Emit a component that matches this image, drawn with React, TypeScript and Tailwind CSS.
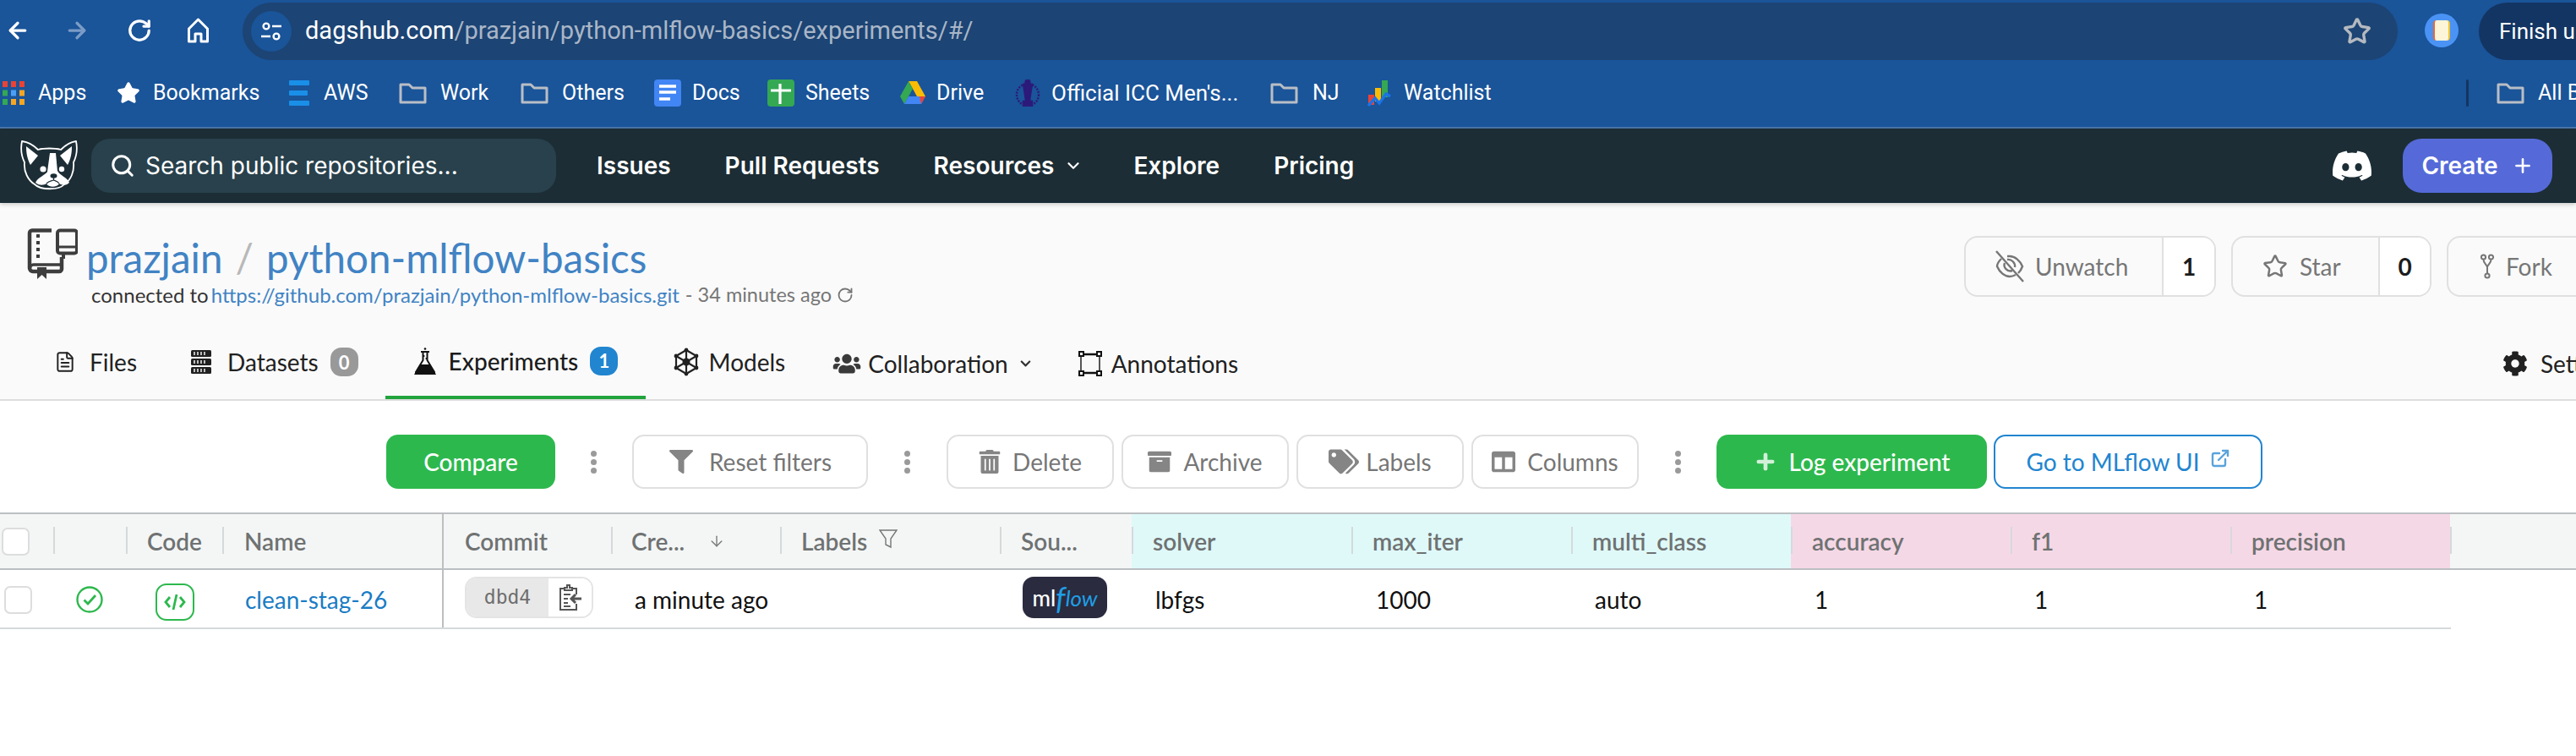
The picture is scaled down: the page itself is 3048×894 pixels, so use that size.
import React from "react";
import { ArrowLeft, ArrowRight, RotateCw, Star, Search, ChevronDown, Plus, ExternalLink, ArrowDown, FileText } from "lucide-react";
import { FaDiscord, FaUsers, FaCog, FaTrashAlt, FaArchive, FaTags, FaColumns, FaFilter, FaChevronDown } from "react-icons/fa";

const FolderIcon = () => (
  <svg viewBox="0 0 33 25" className="w-[33px] h-[25px] shrink-0" fill="none" stroke="#b9bec5" strokeWidth="3" strokeLinejoin="round">
    <path d="M2 2h10l4 4h15v17H2z" />
  </svg>
);

const Bookmark = ({ cls, labelCls, icon, label }: { cls: string; labelCls: string; icon: React.ReactNode; label: string }) => (
  <div className={cls}>
    {icon}
    <span className={labelCls}>{label}</span>
  </div>
);

const AppsIcon = () => (
  <svg viewBox="0 0 26 28" className="w-[26px] h-[28px] shrink-0">
    {["#ea4335", "#ea4335", "#ea4335", "#34a853", "#4a9ff5", "#f5a623", "#34a853", "#f5a623", "#f5a623"].map((c, i) => (
      <rect key={i} x={(i % 3) * 10} y={Math.floor(i / 3) * 10.5} width="6" height="7" fill={c} />
    ))}
  </svg>
);

const Dots = ({ cls }: { cls: string }) => (
  <div className={cls}>
    <span className="w-[7px] h-[7px] rounded-full bg-[#9a9a9a]" />
    <span className="w-[7px] h-[7px] rounded-full bg-[#9a9a9a]" />
    <span className="w-[7px] h-[7px] rounded-full bg-[#9a9a9a]" />
  </div>
);

const ToolButton = ({ icon, label }: { icon: React.ReactNode; label: string }) => (
  <button className="w-[198px] h-[64px] rounded-[14px] border-2 border-[#e0e0e0] bg-white flex items-center justify-center gap-[14px] text-[28px] text-[#767676]">
    {icon}
    <span>{label}</span>
  </button>
);

const Logo = () => (
  <svg viewBox="0 0 68 62" className="w-[68px] h-[62px] shrink-0">
    <path d="M2 2C10 3 17 8 21 12C28 10 41 10 48 12C52 8 59 3 66 2C68 12 66 21 63 27C64 38 60 48 52 53C46 60 24 60 17 53C9 48 4 38 5 27C2 21 0 12 2 2Z" fill="none" stroke="#fff" strokeWidth="1.800" strokeLinejoin="round" />
    <path d="M7 8L21 19L12 30C8 23 7 15 7 8Z" fill="#fff" />
    <path d="M61 8L47 19L56 30C60 23 61 15 61 8Z" fill="#fff" />
    <path d="M35 16H42L44 38H32Z" fill="#fff" />
    <circle cx="27" cy="35" r="3.600" fill="#fff" />
    <circle cx="49" cy="35" r="3.200" fill="#fff" />
    <path d="M33 37C30 42 20 45 18 51C23 55 28 54 31 52C33 57 44 57 46 52C49 54 54 55 58 51C56 45 46 42 44 37Z" fill="#fff" />
    <ellipse cx="39.500" cy="43" rx="4" ry="2.800" fill="#1c2d35" />
    <path d="M39.500 45V48M31 52C34 49 37 49 39.500 48C42 49 44 49 46 52" stroke="#1c2d35" strokeWidth="1.300" fill="none" />
  </svg>
);

const Th = ({ cls, children }: { cls: string; children?: React.ReactNode }) => (
  <div className={cls}>{children}</div>
);

const divider = "relative flex items-center before:content-[''] before:absolute before:left-0 before:top-[15px] before:h-[32px] before:w-[1.5px] before:bg-[#d6d9da]";
const bm = "text-[25px] leading-[30px] text-white whitespace-nowrap";

export default function App() {
  return (
    <div className="w-[3048px] h-[894px] overflow-hidden bg-white flex flex-col font-['Lato',sans-serif]">
      {/* Browser toolbar */}
      <div className="h-[72px] bg-[#1a5499] flex items-center shrink-0 font-['Roboto',sans-serif]">
        <ArrowLeft className="ml-[6px] w-[30px] h-[30px] shrink-0 text-white" strokeWidth={2.6} />
        <ArrowRight className="ml-[40px] w-[30px] h-[30px] shrink-0 text-[#7b9cc6]" strokeWidth={2.6} />
        <RotateCw className="ml-[44px] w-[30px] h-[30px] shrink-0 text-white" strokeWidth={2.6} />
        <svg viewBox="0 0 26 30" className="ml-[41px] w-[27px] h-[30px] shrink-0" fill="none" stroke="#fff" strokeWidth="3" strokeLinejoin="round">
          <path d="M2 13L13 2l11 11v15h-7.500v-9h-7v9H2z" />
        </svg>
        <div className="ml-[39px] w-[2550px] shrink-0 h-[68px] mt-[2px] rounded-[34px] bg-[#1c4474] flex items-center pl-[10px]">
          <div className="w-[48px] h-[48px] rounded-full bg-[#1a5499] flex items-center justify-center">
            <svg viewBox="0 0 26 26" className="w-[26px] h-[26px]" fill="none" stroke="#fff" strokeWidth="2.400">
              <circle cx="7" cy="7" r="3.400" />
              <path d="M14 7h11M1 19h11" />
              <circle cx="19" cy="19" r="3.400" />
            </svg>
          </div>
          <div className="ml-[16px] pb-[2px] text-[29px] leading-[36px] whitespace-nowrap">
            <span className="text-white">dagshub.com</span>
            <span className="text-[#a9b6c7]">/prazjain/python-mlflow-basics/experiments/#/</span>
          </div>
          <Star className="ml-auto mr-[31px] w-[34px] h-[34px] text-[#b4b9c0]" strokeWidth={2.4} />
        </div>
        <div className="ml-[32px] w-[40px] h-[40px] shrink-0 rounded-full bg-[#4a93f5] flex items-center justify-center">
          <div className="w-[20px] h-[24px] rounded-[4px] bg-[#fdf5d8] border-r-2 border-l-2 border-r-[#f2c230] border-l-[#e8683a]" />
        </div>
        <div className="ml-[24px] h-[68px] mt-[2px] flex-1 rounded-l-[34px] bg-[#133563] pl-[24px] flex items-center text-[26px] text-white whitespace-nowrap">Finish u</div>
      </div>
      {/* Bookmarks */}
      <div className="h-[80px] pb-[2px] bg-[#1a5499] border-b-2 border-b-[#4a76ab] flex items-center shrink-0 font-['Roboto',sans-serif]">
        <Bookmark cls="ml-[3px] flex items-center gap-[16px]" labelCls={`${bm} w-[56px]`} icon={<AppsIcon />} label="Apps" />
        <Bookmark cls="ml-[37px] flex items-center gap-[15px]" labelCls={`${bm} w-[124px]`} icon={<Star className="w-[28px] h-[28px] text-white fill-white" />} label="Bookmarks" />
        <Bookmark cls="ml-[37px] flex items-center gap-[17px]" labelCls={`${bm} w-[52px]`} icon={
          <svg viewBox="0 0 24 30" className="w-[24px] h-[30px] shrink-0"><rect width="24" height="6" rx="1" fill="#1a8fe8" /><rect y="12" width="22" height="6" rx="1" fill="#1a8fe8" /><rect y="24" width="24" height="6" rx="1" fill="#1a8fe8" /></svg>
        } label="AWS" />
        <Bookmark cls="ml-[37px] flex items-center gap-[16px]" labelCls={`${bm} w-[57px]`} icon={<FolderIcon />} label="Work" />
        <Bookmark cls="ml-[38px] flex items-center gap-[16px]" labelCls={`${bm} w-[76px]`} icon={<FolderIcon />} label="Others" />
        <Bookmark cls="ml-[33px] flex items-center gap-[13px]" labelCls={`${bm} w-[56px]`} icon={
          <svg viewBox="0 0 32 32" className="w-[32px] h-[32px] shrink-0"><rect width="32" height="32" rx="4" fill="#4285f4" /><path d="M6 8h20M6 15h20M6 23h13" stroke="#fff" strokeWidth="3.400" /></svg>
        } label="Docs" />
        <Bookmark cls="ml-[33px] flex items-center gap-[13px]" labelCls={`${bm} w-[76px]`} icon={
          <svg viewBox="0 0 32 32" className="w-[32px] h-[32px] shrink-0"><rect width="32" height="32" rx="4" fill="#34a853" /><path d="M4 13h24M15 5v24" stroke="#fff" strokeWidth="3.200" /></svg>
        } label="Sheets" />
        <Bookmark cls="ml-[36px] flex items-center gap-[13px]" labelCls={`${bm} w-[58px]`} icon={
          <svg viewBox="0 0 30 28" className="w-[30px] h-[28px] shrink-0"><path d="M10 0H20L30 18H20z" fill="#fbbc04" /><path d="M10 0L0 18l5 9L15 9z" fill="#34a853" /><path d="M5 27H25L30 18H10z" fill="#4285f4" /><path d="M25 27L30 18H23z" fill="#ea4335" /></svg>
        } label="Drive" />
        <Bookmark cls="ml-[35px] flex items-center gap-[13px]" labelCls="text-[26px] leading-[30px] text-white whitespace-nowrap w-[222px]" icon={
          <svg viewBox="0 0 30 32" className="w-[30px] h-[32px] shrink-0" fill="none" stroke="#2c1a7a" strokeWidth="2.400"><ellipse cx="15" cy="18" rx="13" ry="13" strokeDasharray="2 1.500" /><path d="M10 6h10l-2 12-1 8h3v5H10v-5h3l-1-8z" fill="#2c1a7a" /><circle cx="15" cy="3" r="2.400" fill="#2c1a7a" /></svg>
        } label="Official ICC Men's..." />
        <Bookmark cls="ml-[37px] flex items-center gap-[17px]" labelCls={`${bm} w-[29px]`} icon={<FolderIcon />} label="NJ" />
        <Bookmark cls="ml-[36px] flex items-center gap-[13px]" labelCls={`${bm} w-[103px]`} icon={
          <svg viewBox="0 0 30 32" className="w-[30px] h-[32px] shrink-0"><rect x="1" y="18" width="7" height="12" fill="#ea4335" /><rect x="9" y="10" width="7" height="16" fill="#fbbc04" /><rect x="17" y="1" width="7" height="20" fill="#34a853" /><path d="M1 31l8-9 5 6 8-11 5 3" stroke="#1a73e8" strokeWidth="3.400" fill="none" /></svg>
        } label="Watchlist" />
        <div className="ml-auto w-[3px] h-[32px] bg-[#133563] rounded-full" />
        <div className="ml-[33px] w-[94px] shrink-0 flex items-center gap-[16px]">
          <FolderIcon />
          <span className={bm}>All B</span>
        </div>
      </div>
      {/* Site nav */}
      <div className="relative z-10 h-[88px] bg-[#1c2d35] flex items-center shrink-0 shadow-[0_2px_5px_rgba(0,0,0,0.18)] font-['Inter',sans-serif]">
        <div className="ml-[24px]"><Logo /></div>
        <div className="ml-[16px] w-[550px] h-[64px] rounded-[22px] bg-[#28414c] flex items-center pl-[22px] gap-[12px]">
          <Search className="w-[30px] h-[30px] text-white" strokeWidth={2.4} />
          <span className="text-[28px] text-white font-normal">Search public repositories...</span>
        </div>
        <nav className="ml-[48px] flex items-center text-[28px] font-semibold text-white">
          <span>Issues</span>
          <span className="ml-[64px]">Pull Requests</span>
          <span className="ml-[64px]">Resources</span>
          <ChevronDown className="ml-[12px] w-[22px] h-[22px] text-white" strokeWidth={2.4} />
          <span className="ml-[60px]">Explore</span>
          <span className="ml-[64px]">Pricing</span>
        </nav>
        <FaDiscord className="ml-auto w-[50px] h-[50px] text-white" />
        <button className="ml-[35px] mr-[28px] w-[177px] h-[64px] rounded-[22px] bg-[#556ad8] flex items-center justify-center gap-[16px] text-[28px] font-semibold text-white">
          Create
          <Plus className="w-[26px] h-[26px]" strokeWidth={2.4} />
        </button>
      </div>
      {/* Repo header */}
      <div className="bg-[#fafafa] border-b-2 border-b-[#dddddd] shrink-0">
        <div className="h-[148px] flex">
          <svg viewBox="12 8 60 62" className="ml-[32px] mt-[29px] w-[60px] h-[62px] shrink-0" fill="none" stroke="#3d3d3d">
            <path d="M41 11.500H18a3 3 0 0 0-3 3V56a4 4 0 0 0 4 4H50a3 3 0 0 0 3-3V43" strokeWidth="4.500" />
            <path d="M15.500 56a4 4 0 0 1 4-4H53" strokeWidth="3.500" />
            <rect x="48" y="11.500" width="23" height="27" rx="3" strokeWidth="4" />
            <path d="M48 31H71" strokeWidth="3" />
            <path d="M55 38v7" strokeWidth="4" />
            <path d="M23 16h4v4h-4zM23 24h4v4h-4zM23 32h4v4h-4zM23 40h4v4h-4z" fill="#3d3d3d" stroke="none" />
            <path d="M24 55H35V69L29.500 64L24 69Z" fill="#3d3d3d" stroke="none" />
          </svg>
          <div className="ml-[10px] mt-[37px]">
            <div className="h-[56px] flex items-center text-[47.500px] text-[#4183c4] whitespace-nowrap">
              <span>prazjain</span>
              <span className="mx-[15px] text-[#b8b8b8]">/</span>
              <span>python-mlflow-basics</span>
            </div>
            <div className="ml-[6px] h-[32px] flex items-center text-[24px] text-[#333333] whitespace-nowrap">
              <span>connected to</span>
              <span className="ml-[3px] text-[#4183c4]">https://github.com/prazjain/python-mlflow-basics.git</span>
              <span className="ml-[7px] text-[23.500px] text-[#767676]">- 34 minutes ago</span>
              <RotateCw className="ml-[6px] w-[20px] h-[20px] text-[#767676]" strokeWidth={2.2} />
            </div>
          </div>
          <div className="ml-auto w-[724px] shrink-0 overflow-hidden pt-[39px] flex gap-[18px] text-[28px] text-[#767676]">
            <div className="w-[298px] h-[72px] shrink-0 rounded-[16px] border-2 border-[#e0e0e0] overflow-hidden flex">
              <div className="w-[232px] flex items-center pl-[34px] gap-[12px]">
                <svg viewBox="0 0 36 40" className="w-[36px] h-[40px] shrink-0" fill="none" stroke="#767676" strokeWidth="2.400">
                  <path d="M2 2l32 36" />
                  <path d="M8 11C5 14 3 18 3 20c3 7 9 12 15 12 3 0 5-1 7-2M15 8c1 0 2 0 3 0 6 0 12 5 15 12-1 3-3 6-5 8" />
                  <path d="M12 16c-2 5 3 11 9 9M15 12c5-1 10 4 9 9" />
                </svg>
                <span>Unwatch</span>
              </div>
              <div className="flex-1 border-l-2 border-l-[#e0e0e0] bg-white flex items-center justify-center text-[#1b1c1d] font-bold">1</div>
            </div>
            <div className="w-[237px] h-[72px] shrink-0 rounded-[16px] border-2 border-[#e0e0e0] overflow-hidden flex">
              <div className="w-[172px] flex items-center pl-[35px] gap-[14px]">
                <Star className="w-[30px] h-[30px] shrink-0 text-[#767676]" strokeWidth={2} />
                <span>Star</span>
              </div>
              <div className="flex-1 border-l-2 border-l-[#e0e0e0] bg-white flex items-center justify-center text-[#1b1c1d] font-bold">0</div>
            </div>
            <div className="w-[200px] h-[72px] shrink-0 rounded-[16px] border-2 border-[#e0e0e0] flex items-center pl-[38px] gap-[14px]">
              <svg viewBox="0 0 16 30" className="w-[16px] h-[30px] shrink-0" fill="none" stroke="#767676" strokeWidth="2">
                <circle cx="3.500" cy="4" r="2.600" /><circle cx="12.500" cy="4" r="2.600" /><circle cx="8" cy="26" r="2.600" />
                <path d="M3.500 7c0 5 4.500 6 4.500 9 0-3 4.500-4 4.500-9M8 16v7" />
              </svg>
              <span>Fork</span>
            </div>
          </div>
        </div>
        {/* Tabs */}
        <div className="h-[84px] flex items-stretch text-[28px] text-[#212121]">
          <div className="ml-[64px] pb-[4px] flex items-center gap-[16px]">
            <FileText className="w-[26px] h-[30px] text-[#212121]" strokeWidth={1.8} />
            <span>Files</span>
          </div>
          <div className="ml-[64px] pb-[4px] flex items-center">
            <svg viewBox="0 0 24 28" className="w-[24px] h-[28px] shrink-0" fill="#212121">
              <rect width="24" height="8" rx="1.500" /><rect y="10" width="24" height="8" rx="1.500" /><rect y="20" width="24" height="8" rx="1.500" />
              <path d="M4 2v4M8 2v4M12 2v4M16 2v4M4 12v4M8 12v4M12 12v4M16 12v4M4 22v4M8 22v4M12 22v4M16 22v4" stroke="#fff" strokeWidth="1.400" />
            </svg>
            <span className="ml-[19px]">Datasets</span>
            <span className="ml-[14px] w-[33px] h-[34px] rounded-[13px] bg-[#999999] text-white text-[22px] font-bold flex items-center justify-center">0</span>
          </div>
          <div className="ml-[32px] w-[308px] pl-[33px] pb-[3px] flex items-center border-b-4 border-b-[#21a43c] font-medium text-[#1b1c1d]">
            <svg viewBox="0 0 28 32" className="w-[28px] h-[32px] shrink-0">
              <path d="M9 5h10M11.500 5v10L3 29a2 2 0 0 0 2 2h18a2 2 0 0 0 2-2L16.500 15V5" fill="none" stroke="#111" strokeWidth="2" />
              <path d="M8 20h12L27 32H1z" fill="#111" />
              <circle cx="14" cy="1.500" r="1.300" fill="#111" /><circle cx="12.500" cy="10" r="1.100" fill="#111" /><circle cx="15.500" cy="13" r="1.100" fill="#111" />
            </svg>
            <span className="ml-[14px]">Experiments</span>
            <span className="ml-[14px] w-[33px] h-[34px] rounded-[13px] bg-[#2185d0] text-white text-[22px] font-bold flex items-center justify-center">1</span>
          </div>
          <div className="ml-[33px] pb-[4px] flex items-center">
            <svg viewBox="0 0 30 34" className="w-[30px] h-[34px] shrink-0" fill="#212121" stroke="#212121" strokeWidth="2.200" strokeLinejoin="round">
              <path d="M15 3l12 7v14l-12 7-12-7V10z" fill="none" />
              <path d="M15 3v28M3 10l24 14M27 10L3 24" fill="none" />
              <circle cx="15" cy="17" r="3.400" /><circle cx="15" cy="3" r="1.300" /><circle cx="15" cy="31" r="1.300" /><circle cx="3" cy="10" r="1.300" /><circle cx="27" cy="10" r="1.300" /><circle cx="3" cy="24" r="1.300" /><circle cx="27" cy="24" r="1.300" />
            </svg>
            <span className="ml-[12px]">Models</span>
          </div>
          <div className="ml-[55px] flex items-center">
            <FaUsers className="w-[36px] h-[26px] text-[#3a3a3a] shrink-0" />
            <span className="ml-[7px]">Collaboration</span>
            <FaChevronDown className="ml-[12px] w-[17px] h-[14px] text-[#333333]" />
          </div>
          <div className="ml-[54px] flex items-center">
            <svg viewBox="0 0 28 30" className="w-[28px] h-[30px] shrink-0" fill="none" stroke="#111" strokeWidth="2">
              <path d="M4 4h20M4 26h20" strokeWidth="2.600" /><path d="M3 4v22M25 4v22" strokeWidth="1.400" />
              <rect x="1" y="1" width="5" height="5" fill="#fff" /><rect x="22" y="1" width="5" height="5" fill="#fff" /><rect x="1" y="24" width="5" height="5" fill="#fff" /><rect x="22" y="24" width="5" height="5" fill="#fff" />
            </svg>
            <span className="ml-[11px]">Annotations</span>
          </div>
          <div className="ml-auto w-[87px] shrink-0 flex items-center gap-[15px]">
            <FaCog className="w-[30px] h-[30px] shrink-0 text-[#212121]" />
            <span className="whitespace-nowrap">Sett</span>
          </div>
        </div>
      </div>
      {/* Toolbar */}
      <div className="h-[132px] shrink-0 flex items-start pt-[40px] pl-[457px]">
        <button className="w-[200px] h-[64px] rounded-[14px] bg-[#2db84d] text-white text-[28px] font-medium">Compare</button>
        <Dots cls="ml-[41px] mt-[19px] w-[8px] flex flex-col items-center gap-[3px]" />
        <button className="ml-[42px] w-[279px] h-[64px] rounded-[14px] border-2 border-[#e0e0e0] bg-white flex items-center justify-center gap-[18px] text-[28px] text-[#767676]">
          <FaFilter className="w-[30px] h-[28px] text-[#858585]" />
          <span>Reset filters</span>
        </button>
        <Dots cls="ml-[42px] mt-[19px] w-[8px] flex flex-col items-center gap-[3px]" />
        <div className="ml-[43px] flex gap-[9px]">
          <ToolButton icon={<FaTrashAlt className="w-[26px] h-[28px] text-[#858585]" />} label="Delete" />
          <ToolButton icon={<FaArchive className="w-[28px] h-[28px] text-[#858585]" />} label="Archive" />
          <ToolButton icon={<FaTags className="w-[36px] h-[30px] -mr-[6px] text-[#858585]" />} label="Labels" />
          <ToolButton icon={<FaColumns className="w-[28px] h-[28px] text-[#858585]" />} label="Columns" />
        </div>
        <Dots cls="ml-[42px] mt-[19px] w-[8px] flex flex-col items-center gap-[3px]" />
        <button className="ml-[42px] w-[320px] h-[64px] rounded-[14px] bg-[#2db84d] text-white text-[28px] font-medium flex items-center justify-center gap-[14px]">
          <Plus className="w-[28px] h-[28px] text-[#d2f0d9]" strokeWidth={4} />
          Log experiment
        </button>
        <button className="ml-[8px] w-[318px] h-[64px] rounded-[14px] border-2 border-[#2185d0] bg-white text-[#2185d0] text-[28px] flex items-center justify-center gap-[12px]">
          Go to MLflow UI
          <ExternalLink className="w-[24px] h-[24px] -mt-[8px] text-[#5aa3dc]" strokeWidth={2.4} />
        </button>
      </div>
      {/* Table */}
      <div className="w-[3048px] shrink-0">
        <div className="h-[68px] bg-[#f4f6f6] border-y-2 border-y-[#bbbfc2] grid grid-cols-[63px_86px_114px_260px_200px_200px_260px_156px_260px_260px_260px_260px_260px_260px_149px] text-[28px] font-semibold text-[#6f7272]">
          <Th cls="flex items-center pl-[2px]"><span className="w-[33px] h-[33px] rounded-[7px] border-2 border-[#dddddd] bg-white" /></Th>
          <Th cls={divider} />
          <Th cls={`${divider} pl-[25px]`}>Code</Th>
          <Th cls={`${divider} pl-[26px]`}>Name</Th>
          <Th cls="flex items-center pl-[25px] border-l-2 border-l-[#bbbfc2]">Commit</Th>
          <Th cls={`${divider} pl-[24px]`}>Cre...<ArrowDown className="ml-[28px] w-[20px] h-[26px] text-[#767676]" strokeWidth={1.6} /></Th>
          <Th cls={`${divider} pl-[25px]`}>Labels
            <svg viewBox="0 0 22 24" className="ml-[14px] -mt-[6px] w-[22px] h-[24px]" fill="none" stroke="#767676" strokeWidth="1.400"><path d="M1 2h20l-7 10v10l-6-3v-7z" /></svg>
          </Th>
          <Th cls={`${divider} pl-[25px]`}>Sou...</Th>
          <Th cls={`${divider} pl-[25px] bg-[#dff9f9]`}>solver</Th>
          <Th cls={`${divider} pl-[25px] bg-[#dff9f9]`}>max_iter</Th>
          <Th cls={`${divider} pl-[25px] bg-[#dff9f9]`}>multi_class</Th>
          <Th cls={`${divider} pl-[25px] bg-[#f5d8e6]`}>accuracy</Th>
          <Th cls={`${divider} pl-[25px] bg-[#f5d8e6]`}>f1</Th>
          <Th cls={`${divider} pl-[25px] bg-[#f5d8e6]`}>precision</Th>
          <Th cls={divider} />
        </div>
        <div className="w-[2900px] h-[70px] pt-[2px] border-b-2 border-b-[#d5d9dc] grid grid-cols-[63px_86px_114px_260px_200px_200px_260px_156px_260px_260px_260px_260px_260px_260px] items-center text-[28px] text-[#111111]">
          <div className="pl-[5px] flex"><span className="w-[33px] h-[33px] rounded-[7px] border-2 border-[#dddddd] bg-white" /></div>
          <div className="pl-[27px] flex">
            <svg viewBox="0 0 32 32" className="w-[32px] h-[32px]" fill="none" stroke="#2db84d" strokeWidth="2.400"><circle cx="16" cy="16" r="14.500" /><path d="M9.500 16.500l4.500 4.500 9-10" strokeWidth="2.800" /></svg>
          </div>
          <div className="pl-[35px] flex">
            <div className="w-[46px] h-[44px] mt-[5px] rounded-[13px] border-2 border-[#2db84d] flex items-center justify-center">
              <svg viewBox="0 0 26 20" className="w-[26px] h-[20px]" fill="none" stroke="#2db84d" strokeWidth="2.800"><path d="M7 4l-5 6 5 6M19 4l5 6-5 6M15 1l-4 18" /></svg>
            </div>
          </div>
          <div className="pl-[27px] text-[#1a7cc4]">clean-stag-26</div>
          <div className="self-stretch -mt-[2px] pt-[2px] flex items-center pl-[25px] border-l-2 border-l-[#bbbfc2]">
            <div className="w-[152px] h-[49px] -mt-[5px] rounded-[14px] border-2 border-[#e4e4e4] overflow-hidden flex">
              <div className="w-[97px] bg-[#e8e8e8] flex items-center justify-center font-['DejaVu_Sans_Mono',monospace] text-[23px] text-[#6e6e6e]">dbd4</div>
              <div className="flex-1 bg-white flex items-center justify-center">
                <svg viewBox="0 0 28 32" className="w-[28px] h-[32px]" fill="none" stroke="#555555" strokeWidth="2">
                  <path d="M7 5H2v25h19v-7M21 12V5h-5" /><path d="M7 7V4h3V1h3v3h3v3z" fill="#fff" />
                  <path d="M6 12h8M6 17h5M6 22h5M6 26h8" /><path d="M27 17H15m5-5l-5 5 5 5" strokeWidth="3" />
                </svg>
              </div>
            </div>
          </div>
          <div className="pl-[28px]">a minute ago</div>
          <div />
          <div className="pl-[27px] flex">
            <div className="w-[100px] h-[49px] -mt-[5px] rounded-[13px] bg-[#2a2b3f] flex items-center justify-center text-[26px] leading-none">
              <span className="text-white font-medium">ml</span>
              <span className="italic text-[#1f9fe6] text-[36px]">f</span>
              <span className="italic text-[#1f9fe6]">low</span>
            </div>
          </div>
          <div className="pl-[28px]">lbfgs</div>
          <div className="pl-[29px]">1000</div>
          <div className="pl-[28px]">auto</div>
          <div className="pl-[28px]">1</div>
          <div className="pl-[28px]">1</div>
          <div className="pl-[28px]">1</div>
        </div>
      </div>
    </div>
  );
}
